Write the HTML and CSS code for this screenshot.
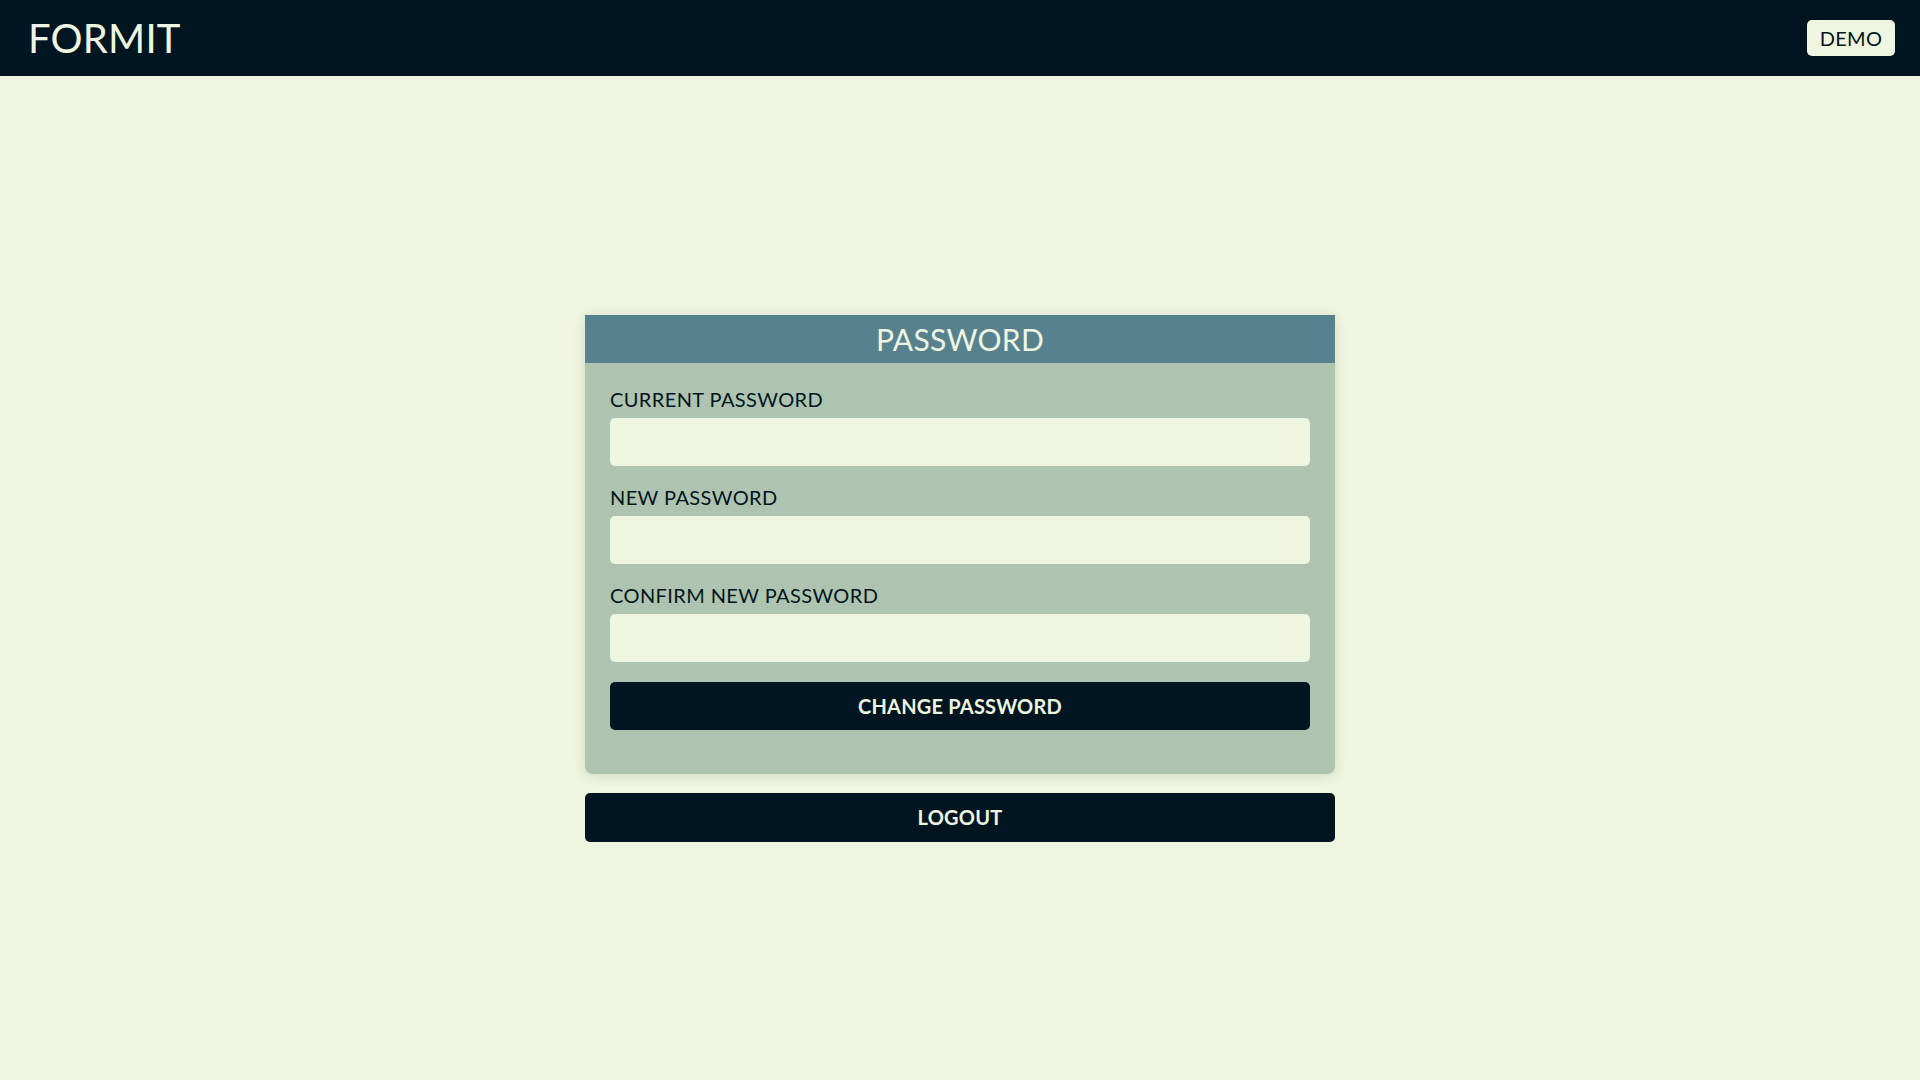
FILE: index.html
```html
<!DOCTYPE html>
<html lang="en">
<head>
<meta charset="utf-8">
<title>Formit - Password</title>
<link rel="stylesheet" href="styles.css">
</head>
<body>
<header class="topbar">
  <div class="brand">FORMIT</div>
  <button class="demo">DEMO</button>
</header>
<main class="main">
  <div class="stack">
    <section class="card">
      <h1 class="card-title">PASSWORD</h1>
      <form class="card-body">
        <label class="field">
          <span class="label">CURRENT PASSWORD</span>
          <input class="input" type="password">
        </label>
        <label class="field">
          <span class="label">NEW PASSWORD</span>
          <input class="input" type="password">
        </label>
        <label class="field">
          <span class="label">CONFIRM NEW PASSWORD</span>
          <input class="input" type="password">
        </label>
        <button class="btn" type="button">CHANGE PASSWORD</button>
      </form>
    </section>
    <button class="btn logout" type="button">LOGOUT</button>
  </div>
</main>
</body>
</html>
```

FILE: styles.css
```css
* { box-sizing: border-box; }
html, body { height: 100%; }
body {
  margin: 0;
  background: #eef5e0;
  color: #011520;
  font-family: "Lato", "Open Sans", sans-serif;
  display: flex;
  flex-direction: column;
}
.topbar {
  height: 76px;
  flex: none;
  background: #011520;
  display: flex;
  align-items: center;
  justify-content: space-between;
  padding: 0 25px 0 28px;
}
.brand {
  color: #eef5e0;
  font-size: 40px;
  line-height: 1;
  letter-spacing: 0.2px;
}
.demo {
  height: 36px;
  width: 88px;
  border: none;
  border-radius: 5px;
  background: #eef5e0;
  color: #011520;
  font-family: inherit;
  font-size: 20px;
  letter-spacing: 0.3px;
  padding: 0;
}
.main {
  flex: 1;
  display: flex;
  align-items: center;
  justify-content: center;
}
.stack {
  width: 750px;
  display: flex;
  flex-direction: column;
  gap: 19px;
}
.card {
  background: #aec4b0;
  border-radius: 0 0 8px 8px;
  box-shadow: 0 2px 12px rgba(80, 100, 60, 0.18);
}
.card-title {
  margin: 0;
  height: 48px;
  background: #58818f;
  color: #eef5e0;
  font-weight: 400;
  font-size: 30px;
  line-height: 48px;
  letter-spacing: 0.3px;
  text-align: center;
}
.card-body {
  padding: 24px 25px 44px;
  display: flex;
  flex-direction: column;
}
.field {
  display: flex;
  flex-direction: column;
  gap: 7px;
  margin-bottom: 19px;
}
.field:nth-of-type(3) { margin-bottom: 20px; }
.label {
  font-size: 20px;
  line-height: 24px;
  letter-spacing: 0.4px;
}
.input {
  height: 48px;
  border: none;
  border-radius: 5px;
  background: #eef5e0;
  font-family: inherit;
  font-size: 18px;
  padding: 0 12px;
  outline: none;
}
.btn {
  height: 48px;
  border: none;
  border-radius: 5px;
  background: #011520;
  color: #eef5e0;
  font-family: inherit;
  font-size: 20px;
  font-weight: 700;
  letter-spacing: 0.2px;
  cursor: pointer;
}
.logout { height: 49px; }
```
